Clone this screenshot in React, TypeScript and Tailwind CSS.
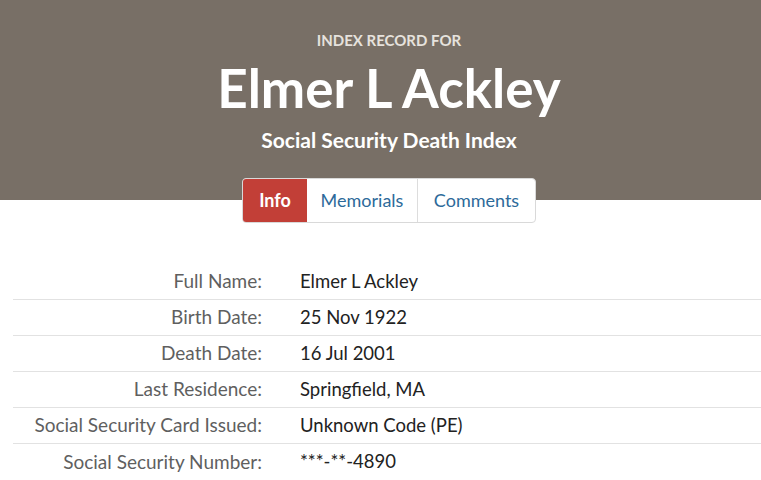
const rows = [
  { label: 'Full Name:', value: 'Elmer L Ackley' },
  { label: 'Birth Date:', value: '25 Nov 1922' },
  { label: 'Death Date:', value: '16 Jul 2001' },
  { label: 'Last Residence:', value: 'Springfield, MA' },
  { label: 'Social Security Card Issued:', value: 'Unknown Code (PE)' },
  { label: 'Social Security Number:', value: '***-**-4890' },
];

export default function App() {
  return (
    <div className="min-h-[480px] bg-white font-['Lato',sans-serif]">
      {/* cabeçalho */}
      <div className="h-[200px] bg-[#786f66] flex flex-col items-center pl-[17px] pt-[30px] text-white">
        <div className="text-[15px] font-bold text-[#e6e2dd] leading-[20px]">INDEX RECORD FOR</div>
        <h1 className="mt-[7px] text-[53px] font-bold leading-[62px]">Elmer L Ackley</h1>
        <div className="mt-[7px] text-[21px] font-bold leading-[28px]">Social Security Death Index</div>
      </div>

      {/* abas */}
      <div className="flex justify-center pl-[17px] -mt-[22px]">
        <div className="flex h-[45px] rounded-[4px] border border-[#d9d9d9] bg-white text-[18px] overflow-hidden">
          <div className="w-[64px] flex items-center justify-center bg-[#c23f37] text-white font-bold">Info</div>
          <div className="w-[111px] flex items-center justify-center text-[#2d6a9a] border-r border-[#dddddd]">Memorials</div>
          <div className="w-[117px] flex items-center justify-center text-[#2d6a9a]">Comments</div>
        </div>
      </div>

      {/* tabela de dados */}
      <div className="mt-[41px] ml-[13px]">
        {rows.map((row, i) => (
          <div
            key={row.label}
            className={`flex h-[36px] items-center ${i < rows.length - 1 ? 'border-b border-[#e2e2e2]' : ''}`}
          >
            <div className="w-[249px] text-right text-[19px] text-[#5f5f5f]">{row.label}</div>
            <div className="pl-[38px] text-[18.5px] text-[#222222]">{row.value}</div>
          </div>
        ))}
      </div>
    </div>
  );
}
